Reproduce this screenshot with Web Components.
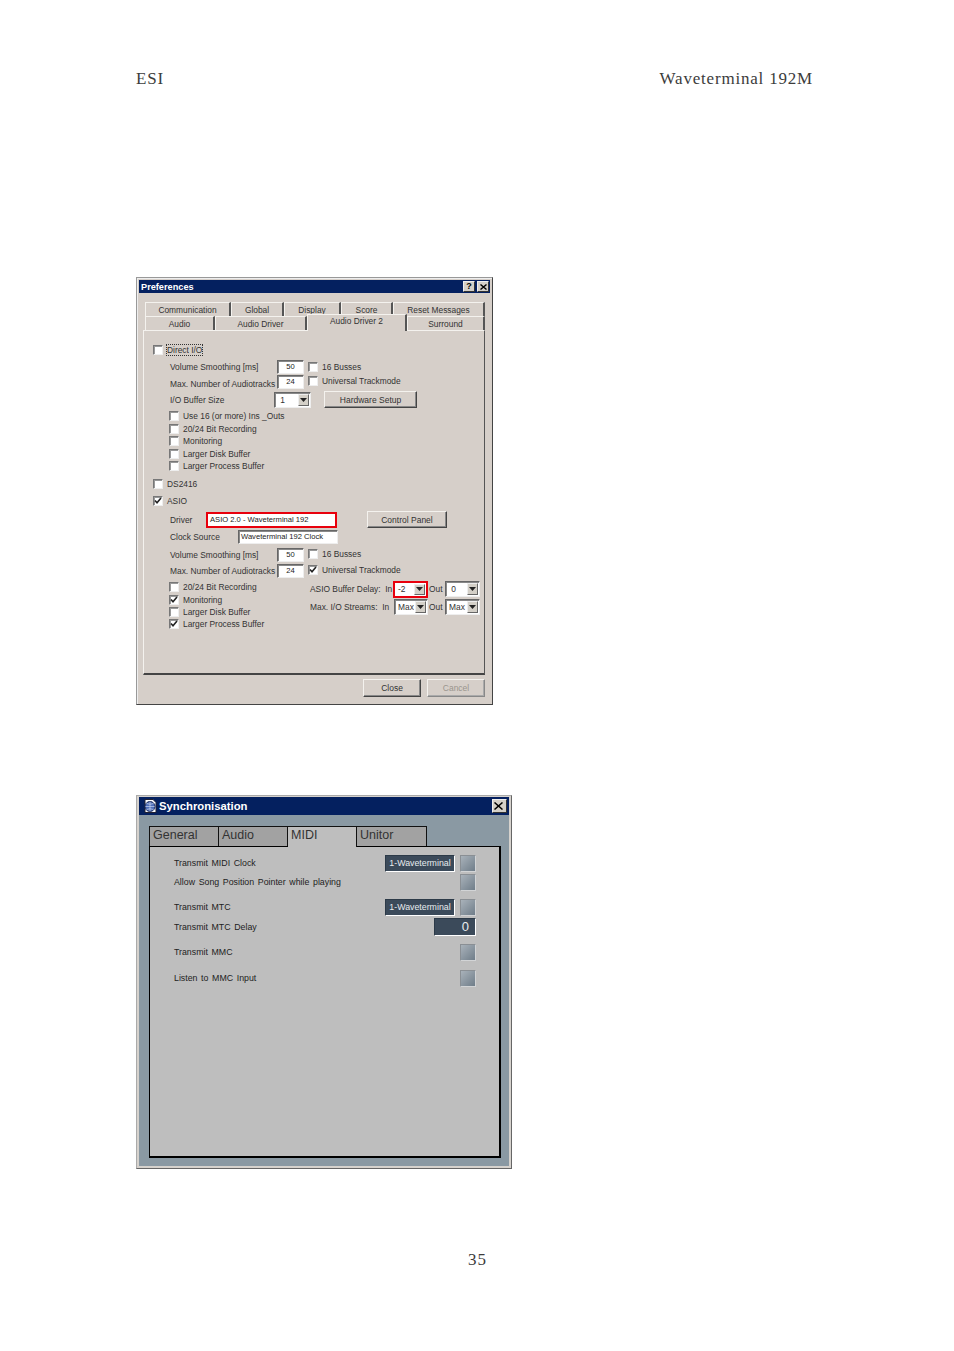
<!DOCTYPE html>
<html>
<head>
<meta charset="utf-8">
<title>Waveterminal 192M</title>
<style>
  html, body { margin: 0; padding: 0; background: #fff; }
</style>
</head>
<body>
<manual-page page="35" left="ESI" right="Waveterminal 192M">
  <pref-window slot="first"></pref-window>
  <sync-window slot="second"></sync-window>
</manual-page>

<script>
const FONT = '"Liberation Sans", Arial, sans-serif';

class ManualPage extends HTMLElement {
  constructor() {
    super();
    this.attachShadow({ mode: 'open' }).innerHTML = `
      <style>
        :host { display: block; width: 954px; height: 1351px; box-sizing: border-box; padding: 69px 141px 0 136px; font-family: "Liberation Serif", serif; color: #3c3c3c; }
        .head { display: flex; justify-content: space-between; height: 20px; line-height: 20px; font-size: 17px; letter-spacing: 0.8px; }
        .first { margin-top: 188px; height: 428px; }
        .second { margin-top: 90px; height: 374px; }
        .foot { margin-top: 81px; padding-left: 332px; height: 20px; line-height: 20px; font-size: 17px; letter-spacing: 0.9px; }
      </style>
      <div class="head"><span>${this.getAttribute('left')}</span><span>${this.getAttribute('right')}</span></div>
      <div class="first"><slot name="first"></slot></div>
      <div class="second"><slot name="second"></slot></div>
      <div class="foot">${this.getAttribute('page')}</div>
    `;
  }
}

class WinCheck extends HTMLElement {
  constructor() {
    super();
    const tick = this.hasAttribute('checked')
      ? '<svg width="8" height="8" viewBox="0 0 8 8"><path d="M1 3.5 L3 5.8 L7 1" fill="none" stroke="#222" stroke-width="1.6"/></svg>'
      : '';
    this.attachShadow({ mode: 'open' }).innerHTML = `
      <style>
        :host { display: inline-flex; align-items: center; margin-left: -1px; }
        .box { width: 10px; height: 10px; box-sizing: border-box; background: #fff; border: 1px solid; border-color: #777 #eee #eee #777; box-shadow: inset 1px 1px #999; display: grid; place-content: center; flex: none; }
        .label { margin-left: 4px; white-space: nowrap; }
        :host([focus]) .label { outline: 1px dotted #333; outline-offset: 0; }
      </style>
      <span class="box">${tick}</span><span class="label"><slot></slot></span>
    `;
  }
}

class WinField extends HTMLElement {
  constructor() {
    super();
    this.attachShadow({ mode: 'open' }).innerHTML = `
      <style>
        :host { display: block; flex: none; box-sizing: border-box; background: #fff; border: 1px solid; border-color: #666 #eee #eee #666; box-shadow: inset 1px 1px #888; font-size: 7.6px; line-height: 11px; color: #222; white-space: nowrap; overflow: hidden; }
        :host([center]) { text-align: center; }
        :host([red]) { border: 2px solid #e8000c; box-shadow: none; }
        span { padding: 0 2px; }
      </style>
      <span><slot></slot></span>
    `;
  }
}

class WinCombo extends HTMLElement {
  constructor() {
    super();
    this.attachShadow({ mode: 'open' }).innerHTML = `
      <style>
        :host { display: flex; flex: none; box-sizing: border-box; height: 16px; background: #fff; border: 1px solid; border-color: #666 #eee #eee #666; box-shadow: inset 1px 1px #888; color: #333; font-size: 8.4px; line-height: 14px; }
        :host([red]) { border: 2px solid #e8000c; box-shadow: none; height: 17px; line-height: 13px; }
        .val { flex: 1; padding-left: 3px; overflow: hidden; white-space: nowrap; }
        .arrow { width: 11px; margin: 1px; box-sizing: border-box; background: #d4d0c8; border: 1px solid; border-color: #eee #666 #666 #eee; display: grid; place-content: center; }
      </style>
      <span class="val"><slot></slot></span>
      <span class="arrow"><svg width="7" height="4" viewBox="0 0 7 4"><path d="M0 0H7L3.5 4Z" fill="#222"/></svg></span>
    `;
  }
}

class WinButton extends HTMLElement {
  constructor() {
    super();
    this.attachShadow({ mode: 'open' }).innerHTML = `
      <style>
        :host { display: grid; place-content: center; flex: none; box-sizing: border-box; background: #d6cfc9; border: 1px solid; border-color: #f4f2ee #444 #444 #f4f2ee; box-shadow: inset -1px -1px #888; color: #333; font-size: 8.5px; white-space: nowrap; }
        :host([disabled]) { color: #9a958e; border-color: #f4f2ee #888 #888 #f4f2ee; box-shadow: inset -1px -1px #aaa; }
      </style>
      <slot></slot>
    `;
  }
}

class PrefWindow extends HTMLElement {
  constructor() {
    super();
    this.attachShadow({ mode: 'open' }).innerHTML = `
      <style>
        :host { display: block; width: 357px; height: 428px; box-sizing: border-box; background: #d6cfc9; border: 1px solid; border-color: #999 #444 #444 #999; box-shadow: inset 1px 1px #eee; padding: 2px; font-family: ${FONT}; font-size: 8.4px; color: #333; }
        .title { height: 13px; background: #04205f; color: #fff; font-weight: bold; font-size: 9.2px; line-height: 13px; padding: 0 1px 0 2px; display: flex; align-items: center; justify-content: space-between; }
        .title > span:first-child { padding-top: 1px; }
        .caps { display: flex; gap: 2px; }
        .cap { width: 12px; height: 11px; box-sizing: border-box; background: #d4d0c8; border: 1px solid; border-color: #eee #333 #333 #eee; display: grid; place-content: center; color: #000; font-size: 9px; line-height: 9px; }
        .tabs { margin: 9px 5px 0 6px; width: 340px; }
        .tabrow { display: flex; height: 14px; }
        .tab { box-sizing: border-box; flex: none; background: #d6cfc9; border-top: 1px solid #f4f2ee; border-left: 1px solid #f4f2ee; border-right: 2px solid #555; text-align: center; line-height: 14px; height: 14px; white-space: nowrap; }
        .tab.on { height: 17px; margin-top: -2px; position: relative; line-height: 13px; z-index: 1; }
        .panel { margin-left: 4px; width: 342px; height: 345px; box-sizing: border-box; border: 1px solid; border-color: #f4f2ee #555 #444 #f4f2ee; border-bottom-width: 2px; padding-top: 11px; }
        .r { display: flex; align-items: center; padding-left: 26px; }
        .r.top { padding-left: 10px; height: 16px; }
        .lbl { flex: none; white-space: nowrap; }
        .w107 { width: 107px; }
        .ck { height: 12.5px; }
        .side { margin-left: 4px; margin-top: -2px; }
        .cols { display: flex; }
        .left { width: 166px; padding-top: 1px; }
        .left .ck { height: 12.4px; }
        .rr { display: flex; align-items: center; height: 18px; }
        .out { width: 17px; padding-left: 1px; box-sizing: border-box; flex: none; }
        .foot { display: flex; justify-content: flex-end; gap: 6px; width: 342px; margin: 4px 0 0 4px; }
        .foot win-button { width: 58px; height: 18px; }
      </style>
      <div class="title"><span>Preferences</span><span class="caps"><span class="cap"><b>?</b></span><span class="cap"><svg width="7" height="6" viewBox="0 0 7 6"><path d="M0.5 0.5L6.5 5.5M6.5 0.5L0.5 5.5" stroke="#000" stroke-width="1.4"/></svg></span></span></div>
      <div class="tabs">
        <div class="tabrow">
          <span class="tab" style="width:86px">Communication</span>
          <span class="tab" style="width:53px">Global</span>
          <span class="tab" style="width:57px">Display</span>
          <span class="tab" style="width:52px">Score</span>
          <span class="tab" style="width:92px">Reset Messages</span>
        </div>
        <div class="tabrow">
          <span class="tab" style="width:70px">Audio</span>
          <span class="tab" style="width:92px">Audio Driver</span>
          <span class="tab on" style="width:100px">Audio Driver 2</span>
          <span class="tab" style="width:78px">Surround</span>
        </div>
      </div>
      <div class="panel">
        <div class="r top"><win-check focus>Direct I/O</win-check></div>
        <div class="r" style="height:14px;margin-top:2px">
          <span class="lbl w107">Volume Smoothing [ms]</span>
          <win-field center style="width:27px;height:14px">50</win-field>
          <win-check class="side" style="margin-top:-1px">16 Busses</win-check>
        </div>
        <div class="r" style="height:14px;margin-top:1px">
          <span class="lbl w107" style="padding-top:3px">Max. Number of Audiotracks</span>
          <win-field center style="width:27px;height:14px">24</win-field>
          <win-check class="side">Universal Trackmode</win-check>
        </div>
        <div class="r" style="height:17px;margin-top:2px">
          <span class="lbl" style="width:104px">I/O Buffer Size</span>
          <win-combo style="width:37px">&nbsp;1</win-combo>
          <win-button style="width:93px;height:17px;margin-left:13px">Hardware Setup</win-button>
        </div>
        <div style="margin-top:2px">
          <div class="r ck"><win-check>Use 16 (or more) Ins _Outs</win-check></div>
          <div class="r ck"><win-check>20/24 Bit Recording</win-check></div>
          <div class="r ck"><win-check>Monitoring</win-check></div>
          <div class="r ck"><win-check>Larger Disk Buffer</win-check></div>
          <div class="r ck"><win-check>Larger Process Buffer</win-check></div>
        </div>
        <div class="r top" style="margin-top:3.5px"><win-check>DS2416</win-check></div>
        <div class="r top" style="margin-top:1px"><win-check checked>ASIO</win-check></div>
        <div class="r" style="height:17px;margin-top:2px">
          <span class="lbl" style="width:36px">Driver</span>
          <win-field red style="width:131px;height:16px">ASIO 2.0 - Waveterminal 192</win-field>
          <win-button style="width:80px;height:17px;margin-left:30px">Control Panel</win-button>
        </div>
        <div class="r" style="height:16px;margin-top:1px">
          <span class="lbl" style="width:68px">Clock Source</span>
          <win-field style="width:100px;height:14px">Waveterminal 192 Clock</win-field>
        </div>
        <div class="r" style="height:15px;margin-top:2px">
          <span class="lbl w107">Volume Smoothing [ms]</span>
          <win-field center style="width:27px;height:14px">50</win-field>
          <win-check class="side">16 Busses</win-check>
        </div>
        <div class="r" style="height:15px;margin-top:1px">
          <span class="lbl w107">Max. Number of Audiotracks</span>
          <win-field center style="width:27px;height:14px">24</win-field>
          <win-check checked class="side">Universal Trackmode</win-check>
        </div>
        <div class="cols" style="margin-top:2px">
          <div class="left">
            <div class="r ck"><win-check>20/24 Bit Recording</win-check></div>
            <div class="r ck"><win-check checked>Monitoring</win-check></div>
            <div class="r ck"><win-check>Larger Disk Buffer</win-check></div>
            <div class="r ck"><win-check checked>Larger Process Buffer</win-check></div>
          </div>
          <div>
            <div class="rr">
              <span class="lbl" style="width:83px">ASIO Buffer Delay:&nbsp; In</span>
              <win-combo red style="width:35px">-2</win-combo>
              <span class="out">Out</span>
              <win-combo style="width:35px;margin-top:-1px">&nbsp;0</win-combo>
            </div>
            <div class="rr">
              <span class="lbl" style="width:84px">Max. I/O Streams:&nbsp; In</span>
              <win-combo style="width:34px">Max</win-combo>
              <span class="out">Out</span>
              <win-combo style="width:35px">Max</win-combo>
            </div>
          </div>
        </div>
      </div>
      <div class="foot"><win-button>Close</win-button><win-button disabled>Cancel</win-button></div>
    `;
  }
}

class SyncRow extends HTMLElement {
  constructor() {
    super();
    this.attachShadow({ mode: 'open' }).innerHTML = `
      <style>
        :host { display: flex; align-items: center; height: 18px; }
        .label { flex: 1; white-space: nowrap; word-spacing: 1.2px; padding-bottom: 1px; }
      </style>
      <span class="label"><slot></slot></span>
      <slot name="control"></slot>
    `;
  }
}

class SyncBtn extends HTMLElement {
  constructor() {
    super();
    this.attachShadow({ mode: 'open' }).innerHTML = `
      <style>
        :host { display: block; flex: none; width: 16px; height: 17px; box-sizing: border-box; margin-left: 5px; border: 1px solid; border-color: #8a8f94 #d2d4d6 #d2d4d6 #8a8f94; background: linear-gradient(135deg, #a9b2ba, #6f7d89); }
      </style>
    `;
  }
}

class SyncValue extends HTMLElement {
  constructor() {
    super();
    this.attachShadow({ mode: 'open' }).innerHTML = `
      <style>
        :host { display: block; flex: none; box-sizing: border-box; height: 17px; background: #3b4a5a; border: 1px solid; border-color: #2c3a48 #fff #fff #2c3a48; color: #e8ecef; font-size: 8.8px; line-height: 15px; padding: 0 2px; white-space: nowrap; overflow: hidden; text-align: center; }
        :host([num]) { font-size: 13px; text-align: right; padding-right: 6px; height: 18px; }
      </style>
      <slot></slot>
    `;
  }
}

class SyncWindow extends HTMLElement {
  constructor() {
    super();
    this.attachShadow({ mode: 'open' }).innerHTML = `
      <style>
        :host { display: block; width: 376px; height: 374px; box-sizing: border-box; background: #8a99a3; border: 1px solid; border-color: #aaa #666 #666 #aaa; box-shadow: inset 0 0 0 2px #d6d2cd; padding: 1px 2px 2px; font-family: ${FONT}; color: #222; }
        .title { height: 18px; background: #04205f; color: #fff; font-weight: bold; font-size: 11.3px; display: flex; align-items: center; padding-left: 4px; }
        .title svg { flex: none; margin-right: 2px; }
        .title span { flex: 1; }
        .close { width: 15px; height: 14px; box-sizing: border-box; margin-right: 2px; background: #d4d0c8; border: 1px solid; border-color: #eee #333 #333 #eee; display: grid; place-content: center; }
        .tabs { display: flex; margin: 11px 0 0 10px; height: 20px; }
        .tab { box-sizing: border-box; width: 69px; height: 20px; background: #a2a2a2; border: 1px solid #111; border-bottom: none; border-left: none; font-size: 12.5px; line-height: 17px; padding-left: 3px; color: #333; }
        .tab:first-child { border-left: 1px solid #111; width: 70px; }
        .tab:last-child { width: 70px; }
        .tab.on { background: #bebebe; height: 21px; position: relative; z-index: 1; }
        .panel { margin-left: 10px; width: 352px; height: 312px; box-sizing: border-box; background: #bebebe; border: 1px solid #000; border-bottom-width: 2px; border-right-width: 2px; padding: 7px 23px 0 24px; font-size: 8.8px; }
      </style>
      <div class="title">
        <svg width="14" height="14" viewBox="0 0 14 14"><path d="M2 0.5H10L13 3.5V13.5H2Z" fill="#fff" stroke="#223"/><circle cx="7" cy="7.5" r="5" fill="#4f6fb8" stroke="#1a2a5a"/><path d="M2.5 7.5H11.5M7 2.5V12.5M3.5 4.5Q7 6 10.5 4.5M3.5 10.5Q7 9 10.5 10.5" fill="none" stroke="#c8d4ee" stroke-width=".7"/></svg>
        <span>Synchronisation</span>
        <div class="close"><svg width="9" height="8" viewBox="0 0 9 8"><path d="M0.5 0.5L8.5 7.5M8.5 0.5L0.5 7.5" stroke="#000" stroke-width="1.5"/></svg></div>
      </div>
      <div class="tabs">
        <div class="tab">General</div>
        <div class="tab">Audio</div>
        <div class="tab on">MIDI</div>
        <div class="tab">Unitor</div>
      </div>
      <div class="panel">
        <sync-row>Transmit MIDI Clock
          <sync-value slot="control" style="width:70px">1-Waveterminal</sync-value><sync-btn slot="control"></sync-btn></sync-row>
        <sync-row style="margin-top:1px">Allow Song Position Pointer while playing
          <sync-btn slot="control"></sync-btn></sync-row>
        <sync-row style="margin-top:7px">Transmit MTC
          <sync-value slot="control" style="width:70px">1-Waveterminal</sync-value><sync-btn slot="control"></sync-btn></sync-row>
        <sync-row style="margin-top:2px">Transmit MTC Delay
          <sync-value slot="control" num style="width:42px">0</sync-value></sync-row>
        <sync-row style="margin-top:7px">Transmit MMC
          <sync-btn slot="control"></sync-btn></sync-row>
        <sync-row style="margin-top:8px">Listen to MMC Input
          <sync-btn slot="control"></sync-btn></sync-row>
      </div>
    `;
  }
}

customElements.define('manual-page', ManualPage);
customElements.define('win-check', WinCheck);
customElements.define('win-field', WinField);
customElements.define('win-combo', WinCombo);
customElements.define('win-button', WinButton);
customElements.define('pref-window', PrefWindow);
customElements.define('sync-row', SyncRow);
customElements.define('sync-btn', SyncBtn);
customElements.define('sync-value', SyncValue);
customElements.define('sync-window', SyncWindow);
</script>
</body>
</html>
